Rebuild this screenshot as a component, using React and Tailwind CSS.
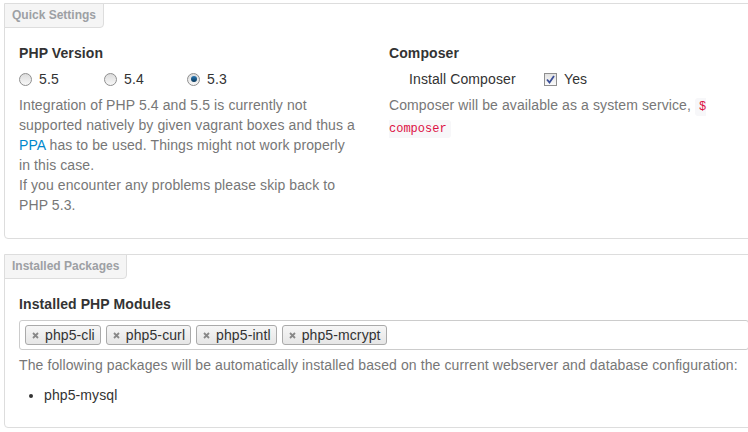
const font = { fontFamily: '"Liberation Sans", Arial, sans-serif', letterSpacing: '0.1px' };

const Legend = ({ children }) => (
  <div className="-mt-px -ml-px w-fit rounded-br-[4px] border border-[#dddddd] bg-[#f5f5f5] px-[7px] py-[3px] text-[12px] font-bold leading-[17px] tracking-normal text-[#9da0a4]">
    {children}
  </div>
);

const Radio = ({ checked }) => (
  <span className="inline-flex h-[13px] w-[13px] items-center justify-center rounded-full border border-[#8f8f8f] bg-gradient-to-b from-[#dcdcdc] to-[#f8f8f8]">
    {checked && (
      <span className="h-[6px] w-[6px] rounded-full bg-gradient-to-b from-[#2a78b5] to-[#0b3a5c]" />
    )}
  </span>
);

const Checkbox = () => (
  <span className="inline-flex h-[13px] w-[13px] items-center justify-center border border-[#8f8f8f] bg-gradient-to-b from-[#e2e2e2] to-[#fafafa]">
    <svg width="9" height="9" viewBox="0 0 9 9">
      <path d="M1 4.5 L3.5 7.5 L8 1" fill="none" stroke="#3b4f97" strokeWidth="1.8" />
    </svg>
  </span>
);

const Tag = ({ name }) => (
  <span className="flex h-[20px] items-center gap-[6px] rounded-[3px] border border-[#aaaaaa] bg-gradient-to-b from-[#f6f6f6] to-[#e6e6e6] pl-[6px] pr-[5px] text-[14px] leading-[17px] text-[#333333]">
    <svg width="7" height="7" viewBox="0 0 7 7">
      <path d="M1 1 L6 6 M6 1 L1 6" stroke="#888888" strokeWidth="1.8" />
    </svg>
    {name}
  </span>
);

export default function App() {
  const versions = [
    { v: '5.5', w: 'w-[85px]' },
    { v: '5.4', w: 'w-[83px]' },
    { v: '5.3', w: 'w-[60px]', checked: true },
  ];

  return (
    <div className="w-[748px] h-[432px] overflow-hidden bg-white pl-[4px] pt-[3px] text-[#333333]" style={font}>
      <div className="w-[760px] rounded-[4px] border border-[#dddddd]">
        <Legend>Quick Settings</Legend>
        <div className="grid grid-cols-[338px_350px] gap-x-[32px] px-[14px] pt-[15px] pb-[13px]">
          <div>
            <h4 className="mb-[6px] text-[14px] font-bold leading-5">PHP Version</h4>
            <div className="flex items-center text-[14px] leading-5">
              {versions.map((item) => (
                <label key={item.v} className={`flex items-center gap-[7px] ${item.w}`}>
                  <Radio checked={item.checked} />
                  {item.v}
                </label>
              ))}
            </div>
            <p className="mt-[6px] mb-[10px] text-[14px] leading-5 text-[#777777]">
              Integration of PHP 5.4 and 5.5 is currently not supported natively by given vagrant boxes and thus a{' '}
              <a className="text-[#0088cc]">PPA</a> has to be used. Things might not work properly in this case.
              <br />
              If you encounter any problems please skip back to PHP 5.3.
            </p>
          </div>
          <div>
            <h4 className="mb-[6px] text-[14px] font-bold leading-5">Composer</h4>
            <div className="flex items-center pl-5 text-[14px] leading-5">
              <span className="w-[135px]">Install Composer</span>
              <label className="flex items-center gap-[7px]">
                <Checkbox />
                Yes
              </label>
            </div>
            <p className="mt-[6px] text-[14px] leading-5 text-[#777777]">
              Composer will be available as a system service,{' '}
              <code
                className="rounded-[3px] bg-[#f7f7f9] px-[4px] py-[2px] text-[12px] tracking-normal text-[#dd1144]"
                style={{ fontFamily: '"Liberation Mono", "Courier New", monospace' }}
              >
                $ composer
              </code>
            </p>
          </div>
        </div>
      </div>

      <div className="mt-[15px] w-[760px] rounded-[4px] border border-[#dddddd]">
        <Legend>Installed Packages</Legend>
        <div className="px-[14px] pt-[15px] pb-[12px]">
          <h4 className="mb-[6px] text-[14px] font-bold leading-5">Installed PHP Modules</h4>
          <div className="flex h-[30px] items-center gap-[5px] rounded-[3px] border border-[#cccccc] pl-[5px]">
            {['php5-cli', 'php5-curl', 'php5-intl', 'php5-mcrypt'].map((m) => (
              <Tag key={m} name={m} />
            ))}
          </div>
          <p className="mt-[5px] mb-[10px] text-[14px] leading-5 text-[#777777]">
            The following packages will be automatically installed based on the current webserver and database configuration:
          </p>
          <ul className="mb-[10px] ml-[25px] list-disc text-[14px] leading-5">
            <li>php5-mysql</li>
          </ul>
        </div>
      </div>
    </div>
  );
}
